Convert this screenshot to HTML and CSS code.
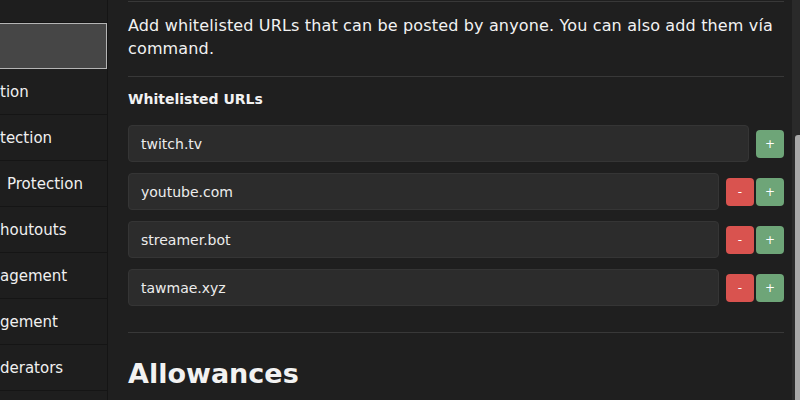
FILE: index.html
```html
<!DOCTYPE html>
<html>
<head>
<meta charset="utf-8">
<link rel="stylesheet" href="styles.css">
</head>
<body>
<div class="app">
  <nav class="sidebar">
    <div class="nav-list">
      <div class="nav-item"></div>
      <div class="nav-item active"></div>
      <div class="nav-item">tion</div>
      <div class="nav-item">tection</div>
      <div class="nav-item indent">Protection</div>
      <div class="nav-item">houtouts</div>
      <div class="nav-item">agement</div>
      <div class="nav-item">gement</div>
      <div class="nav-item">derators</div>
      <div class="nav-item"></div>
    </div>
  </nav>
  <main class="main">
    <section class="section">
      <p class="desc">Add whitelisted URLs that can be posted by anyone. You can also add them vía command.</p>
      <div class="group">
        <h3 class="group-title">Whitelisted URLs</h3>
        <div class="rows">
          <div class="row">
            <div class="input">twitch.tv</div>
            <div class="btns"><button class="btn add">+</button></div>
          </div>
          <div class="row">
            <div class="input">youtube.com</div>
            <div class="btns"><button class="btn del">-</button><button class="btn add">+</button></div>
          </div>
          <div class="row">
            <div class="input">streamer.bot</div>
            <div class="btns"><button class="btn del">-</button><button class="btn add">+</button></div>
          </div>
          <div class="row">
            <div class="input">tawmae.xyz</div>
            <div class="btns"><button class="btn del">-</button><button class="btn add">+</button></div>
          </div>
        </div>
      </div>
      <h2 class="heading">Allowances</h2>
    </section>
  </main>
  <div class="scrolltrack"><div class="thumb"></div></div>
</div>
</body>
</html>
```
FILE: styles.css
```css
* { box-sizing: border-box; }
html, body {
  margin: 0;
  height: 100%;
  overflow: hidden;
  background: #1f1f1f;
  color: #f2f2f2;
  font-family: "DejaVu Sans", sans-serif;
}
.app {
  display: flex;
  height: 400px;
}
.sidebar {
  width: 108px;
  flex: none;
  background: #1e1e1e;
  border-right: 1px solid #151515;
  overflow: hidden;
}
.nav-list {
  margin-top: -23px;
}
.nav-item {
  height: 46px;
  border-bottom: 1px solid #151515;
  display: flex;
  align-items: center;
  font-size: 15px;
  white-space: nowrap;
  overflow: hidden;
  color: #f0f0f0;
}
.nav-item.indent {
  padding-left: 7px;
}
.nav-item.active {
  background: #464646;
  border: 1px solid #b5b5b5;
  border-left: none;
  height: 46px;
}
.main {
  flex: 1;
  padding: 0 8px 0 20px;
  overflow: hidden;
}
.section {
  margin-top: 1px;
  border-top: 1px solid #383838;
}
.desc {
  margin: 0;
  padding: 12px 0 16px;
  font-size: 16px;
  letter-spacing: 0.15px;
  line-height: 23px;
  border-bottom: 1px solid #383838;
}
.group {
  padding: 12px 0 26px;
  border-bottom: 1px solid #383838;
}
.group-title {
  margin: 0 0 16px;
  font-size: 14px;
  line-height: 20px;
  font-weight: bold;
}
.rows {
  display: flex;
  flex-direction: column;
  gap: 11px;
}
.row {
  display: flex;
  align-items: center;
  gap: 7px;
}
.input {
  flex: 1;
  height: 37px;
  background: #2c2c2c;
  border: 1px solid #353535;
  border-radius: 4px;
  padding: 0 12px;
  display: flex;
  align-items: center;
  font-size: 14px;
  color: #ececec;
}
.btns {
  display: flex;
  gap: 2px;
}
.btn {
  width: 28px;
  height: 28px;
  border: none;
  border-radius: 4px;
  color: #fff;
  font-family: "DejaVu Sans", sans-serif;
  font-size: 12px;
  padding: 0;
}
.btn.add { background: #6ea578; }
.btn.del { background: #d9534f; }
.heading {
  margin: 24px 0 0;
  font-size: 27px;
  line-height: 34px;
  font-weight: bold;
}
.scrolltrack {
  width: 8px;
  flex: none;
  background: #2a2a2a;
  display: flex;
  justify-content: flex-end;
}
.thumb {
  width: 5px;
  height: 280px;
  margin-top: 135px;
  background: #a8a8a8;
  border-radius: 3px 0 0 0;
}
```
